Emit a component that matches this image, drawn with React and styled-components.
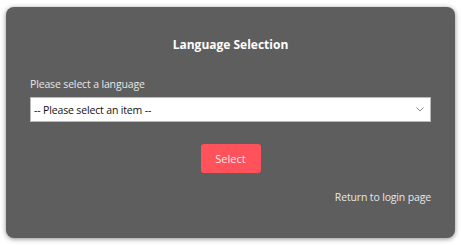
import React from "react";
import styled, { createGlobalStyle } from "styled-components";

const GlobalStyle = createGlobalStyle`
  html, body {
    margin: 0;
    background: #ffffff;
    font-family: "Open Sans", "Noto Sans", sans-serif;
  }
`;

const Page = styled.div`
  padding: 7px 6px 7px 6px;
`;

const Card = styled.div`
  width: 449px;
  height: 231px;
  box-sizing: border-box;
  padding: 30px 24px 0 24px;
  background-color: #5e5e5e;
  border-radius: 8px;
  box-shadow: 0 1px 5px rgba(0, 0, 0, 0.45);
  display: flex;
  flex-direction: column;
`;

const Title = styled.h2`
  margin: 0;
  color: #ffffff;
  font-size: 12px;
  font-weight: 700;
  text-align: center;
  line-height: 16px;
`;

const Label = styled.label`
  margin: 24px 0 0 0;
  color: #e6e6e6;
  font-size: 10.5px;
  letter-spacing: -0.15px;
  line-height: 15px;
`;

const SelectBox = styled.div`
  margin-top: 5px;
  height: 25px;
  box-sizing: border-box;
  background: #ffffff;
  border: 1px solid #b8b8b8;
  display: flex;
  align-items: center;
  justify-content: space-between;
  padding: 0 6px 0 3px;
  color: #111111;
  font-size: 10.5px;
  letter-spacing: -0.15px;
`;

const Chevron = styled.svg`
  width: 8px;
  height: 5px;
`;

const ButtonRow = styled.div`
  display: flex;
  justify-content: center;
  margin-top: 22px;
`;

const Button = styled.button`
  width: 60px;
  height: 29px;
  border: none;
  border-radius: 3px;
  background-color: #ff525a;
  color: #ffe8ea;
  font-family: inherit;
  font-size: 11px;
  padding: 0;
`;

const LinkRow = styled.div`
  display: flex;
  justify-content: flex-end;
  margin-top: 17px;
`;

const ReturnLink = styled.a`
  color: #e6e6e6;
  font-size: 10.5px;
  letter-spacing: -0.15px;
  text-decoration: none;
  line-height: 15px;
`;

export default function App() {
  return (
    <>
      <GlobalStyle />
      <Page>
        <Card>
          <Title>Language Selection</Title>
          <Label>Please select a language</Label>
          <SelectBox>
            <span>-- Please select an item --</span>
            <Chevron viewBox="0 0 8 5">
              <path d="M0.5 0.5 L4 4 L7.5 0.5" fill="none" stroke="#888" strokeWidth="1" />
            </Chevron>
          </SelectBox>
          <ButtonRow>
            <Button>Select</Button>
          </ButtonRow>
          <LinkRow>
            <ReturnLink href="#">Return to login page</ReturnLink>
          </LinkRow>
        </Card>
      </Page>
    </>
  );
}
